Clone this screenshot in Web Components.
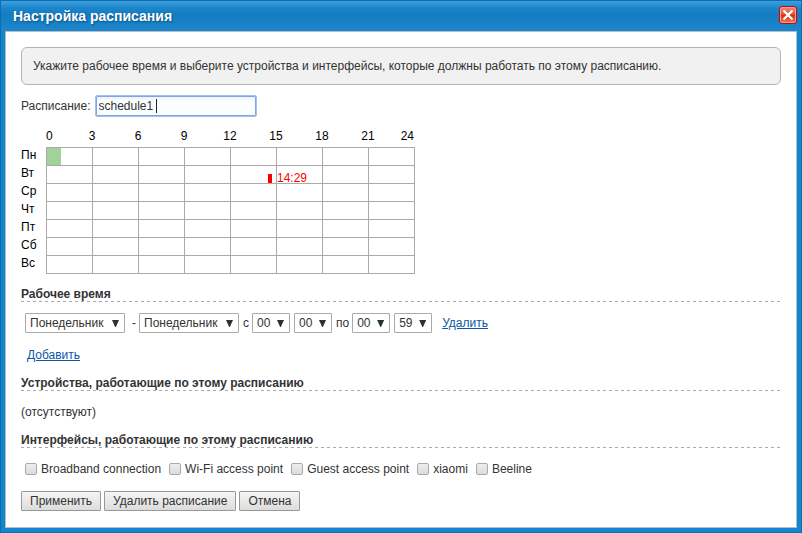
<!DOCTYPE html>
<html lang="ru">
<head>
<meta charset="utf-8">
<title>Настройка расписания</title>
<style>
html, body { margin: 0; }
body { font: 12px/18px "Liberation Sans", Arial, sans-serif; color: #333; background: #1186ce; }
</style>
</head>
<body>
<schedule-dialog></schedule-dialog>
<script>
function define(name, css, html, setup) {
  const template = document.createElement('template');
  template.innerHTML = `<style>*{box-sizing:border-box}${css}</style>${html}`;
  customElements.define(name, class extends HTMLElement {
    constructor() {
      super();
      this.attachShadow({ mode: 'open' }).append(template.content.cloneNode(true));
      this.ready = false;
    }
    connectedCallback() {
      if (this.ready) return;
      this.ready = true;
      if (setup) setup(this, this.shadowRoot);
    }
  });
}

define('dialog-window', `
:host { display: flex; flex-direction: column; box-sizing: border-box; min-height: 100vh; padding: 0 4px 4px;
  background: #1186ce; border: 1px solid #0c6eae; }
header { display: flex; align-items: flex-start; justify-content: space-between; height: 30px; margin: 0 -4px;
  padding: 5px 4px 0 12px; background: linear-gradient(#3d9fdd, #1b85cb 25%, #157cc0 45%, #1d86cc); }
h1 { margin: 0; color: #fff; font-size: 14px; line-height: 20px; font-weight: 700; text-shadow: 1px 1px 2px #0a4f80; }
button { display: block; width: 18px; height: 18px; padding: 0; border: 1px solid #c80808; border-radius: 3px;
  background: linear-gradient(#ee8a76, #e2553c 45%, #dc2b0c 50%, #ee7a5c); box-shadow: inset 0 0 0 1px #f0a391; }
svg { display: block; margin: auto; }
main { flex: 1; padding: 15px; background: #fff; border: 1px solid #b9bcbe; }
`, `<header><h1></h1><button type="button" aria-label="Закрыть"><svg width="14" height="14" viewBox="0 0 14 14"><path d="M2.5 2.5L11.5 11.5M11.5 2.5L2.5 11.5" stroke="#fff" stroke-width="2.2"/></svg></button></header><main><slot></slot></main>`,
(el, root) => { root.querySelector('h1').textContent = el.getAttribute('heading'); });

define('info-note', `
:host { display: block; box-sizing: border-box; padding: 9px 11px; background: #f1f1f1; border: 1px solid #b4b4b4; border-radius: 6px; }
`, `<slot></slot>`);

define('section-title', `
:host { display: block; }
h2 { margin: 0; font-size: 12px; line-height: 14px; font-weight: 700; }
div { height: 1px; background: repeating-linear-gradient(90deg, #aaa 0 3px, transparent 3px 6px); }
`, `<h2><slot></slot></h2><div></div>`);

define('name-field', `
:host { display: block; }
label { display: flex; align-items: center; gap: 4px; }
input { display: block; width: 162px; height: 22px; padding: 0 3px; font: inherit; color: #333; caret-color: transparent;
  background: linear-gradient(#222, #222) 60px 3px / 1px 14px no-repeat, linear-gradient(#eee, #fafefe 5px);
  border: 1px solid #a4c0f3; border-radius: 2px; outline: 1px solid #7ea4ea; outline-offset: -2px; }
`, `<label><span>Расписание:</span><input type="text"></label>`,
(el, root) => { root.querySelector('input').value = el.getAttribute('value'); });

define('week-grid', `
:host { display: block; color: #000; }
.hours { display: grid; grid-template-columns: 23px repeat(7, 46px) 23px; margin-left: 25px; text-align: center; height: 20px; width: 368px; }
.hours :first-child { text-align: left; } .hours :last-child { text-align: right; }
.body { position: relative; }
table { border-collapse: collapse; table-layout: fixed; width: 394px; }
th { font-weight: 400; text-align: left; vertical-align: top; padding: 0; width: 25px; line-height: 14px; }
td { padding: 0; width: 46px; height: 18px; border: 1px solid #aaa; }
.on { width: 14px; height: 17px; background: #a1d29a; }
.now { position: absolute; left: 247px; top: 22px; display: flex; align-items: center; gap: 5px; color: #f00; }
.now i { width: 4px; height: 9px; background: #f00; }
`, `<div class="hours"></div><div class="body"><table><tbody></tbody></table><div class="now"><i></i><span>14:29</span></div></div>`,
(el, root) => {
  root.querySelector('.hours').innerHTML = [0,3,6,9,12,15,18,21,24].map(h => `<span>${h}</span>`).join('');
  root.querySelector('tbody').innerHTML = ['Пн','Вт','Ср','Чт','Пт','Сб','Вс'].map((d, r) =>
    `<tr><th scope="row">${d}</th>${Array.from({ length: 8 }, (_, c) => `<td>${r + c ? '' : '<div class="on"></div>'}</td>`).join('')}</tr>`).join('');
});

define('drop-down', `
:host { display: inline-block; position: relative; }
select { appearance: none; display: block; width: 38px; height: 20px; margin: 0; padding: 0 4px; font: inherit; color: #333;
  background: #fff; border: 1px solid #aaa; border-radius: 1px; }
:host([wide]) select { width: 100px; }
i { position: absolute; right: 6px; top: 7px; width: 7px; height: 7px; background: #263238; clip-path: polygon(0 0, 100% 0, 55% 100%, 45% 100%); pointer-events: none; }
`, `<select></select><i></i>`,
(el, root) => {
  const s = root.querySelector('select');
  s.setAttribute('aria-label', el.getAttribute('label'));
  s.add(new Option(el.getAttribute('value')));
});

define('text-link', `:host { display: inline-block; } a { color: #0c58a5; text-decoration: underline; }`, `<a href="#"><slot></slot></a>`);

define('time-range', `
:host { display: flex; align-items: center; height: 20px; padding-left: 4px; }
.dash { margin: 0 3px 0 7px; } .from { margin: 0 3px 0 4px; } .gap { margin-left: 4px; } .to { margin: 0 3px 0 4px; }
text-link { margin-left: 10px; }
`, `<drop-down wide label="День начала" value="Понедельник"></drop-down><span class="dash">-</span><drop-down wide label="День окончания" value="Понедельник"></drop-down><span class="from">с</span><drop-down label="Часы начала" value="00"></drop-down><drop-down class="gap" label="Минуты начала" value="00"></drop-down><span class="to">по</span><drop-down label="Часы окончания" value="00"></drop-down><drop-down class="gap" label="Минуты окончания" value="59"></drop-down><text-link>Удалить</text-link>`);

define('check-item', `
:host { display: block; }
label { display: flex; align-items: center; gap: 4px; }
input { appearance: none; width: 12px; height: 12px; margin: 0; border: 1px solid #aaa; border-radius: 2px; background: linear-gradient(#eee, #dcdcdc); }
`, `<label><input type="checkbox"><span><slot></slot></span></label>`);

define('push-button', `
:host { display: block; }
button { display: block; height: 20px; margin: 0; padding: 0 8px; font: inherit; line-height: 18px; color: #333; background: linear-gradient(#f5f5f5, #dcdcdc);
  border: 1px solid #999; border-radius: 1px; }
`, `<button type="button"><slot></slot></button>`);

define('schedule-dialog', `
:host { display: block; }
name-field { margin-top: 10px; }
week-grid { margin: 10px 0 13px; }
section-title { margin-top: 12px; }
time-range { margin-top: 11px; }
.add { display: block; margin: 13px 0 0 6px; }
.none { margin: 12px 0 0; }
.checks { display: flex; flex-wrap: wrap; gap: 8px; margin: 12px 0 0 4px; }
.buttons { display: flex; gap: 3px; margin-top: 13px; }
`, `<dialog-window heading="Настройка расписания">
<info-note>Укажите рабочее время и выберите устройства и интерфейсы, которые должны работать по этому расписанию.</info-note>
<name-field value="schedule1"></name-field>
<week-grid></week-grid>
<section-title>Рабочее время</section-title>
<time-range></time-range>
<text-link class="add">Добавить</text-link>
<section-title>Устройства, работающие по этому расписанию</section-title>
<p class="none">(отсутствуют)</p>
<section-title>Интерфейсы, работающие по этому расписанию</section-title>
<div class="checks"><check-item>Broadband connection</check-item><check-item>Wi-Fi access point</check-item><check-item>Guest access point</check-item><check-item>xiaomi</check-item><check-item>Beeline</check-item></div>
<div class="buttons"><push-button>Применить</push-button><push-button>Удалить расписание</push-button><push-button>Отмена</push-button></div>
</dialog-window>`);
</script>
</body>
</html>
